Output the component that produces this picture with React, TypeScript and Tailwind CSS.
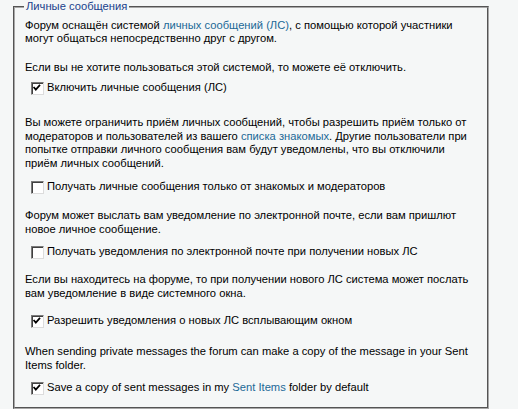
import React from "react";

const LINK = "text-[#1b6896]";

function Box({ checked }: { checked?: boolean }) {
  return (
    <span className="relative inline-block h-[13px] w-[13px] shrink-0 border border-t-[#7a7a7a] border-l-[#7a7a7a] border-r-[#dcdcdc] border-b-[#dcdcdc] bg-white shadow-[inset_1px_1px_0_#404040]">
      {checked ? (
        <svg viewBox="0 0 13 13" className="absolute left-0 top-0 h-[11px] w-[11px]">
          <path d="M2.5 5.5 L4.5 7.8 L8.8 3" fill="none" stroke="#000" strokeWidth="2" strokeLinecap="square" />
        </svg>
      ) : null}
    </span>
  );
}

function Check({ checked, children }: { checked?: boolean; children: React.ReactNode }) {
  return (
    <label className="ml-[6px] flex h-[14px] items-center gap-[3px] whitespace-nowrap">
      <Box checked={checked} />
      <span>{children}</span>
    </label>
  );
}

export default function App() {
  return (
    <div
      className="min-h-[409px] w-[518px] bg-[#f5f7f7] pl-[13px] text-[11.2px] leading-[13.5px] text-black"
      style={{ fontFamily: '"Liberation Sans", Arial, sans-serif' }}
    >
      <fieldset className="w-[476px] border-2 border-[#a8a8a8] pb-[12px] pl-[10px] pr-1 whitespace-nowrap [border-style:groove]">
        <legend className="ml-[-1px] px-[2px] text-[#203f8c]">Личные сообщения</legend>

        <p className="mt-[5px]">
          Форум оснащён системой <span className={LINK}>личных сообщений (ЛС)</span>, с помощью которой участники
          <br />
          могут общаться непосредственно друг с другом.
        </p>
        <p className="mt-[15px]">Если вы не хотите пользоваться этой системой, то можете её отключить.</p>
        <div className="mt-[7px]">
          <Check checked>Включить личные сообщения (ЛС)</Check>
        </div>

        <p className="mt-[21px]">
          Вы можете ограничить приём личных сообщений, чтобы разрешить приём только от
          <br />
          модераторов и пользователей из вашего <span className={LINK}>списка знакомых</span>. Другие пользователи при
          <br />
          попытке отправки личного сообщения вам будут уведомлены, что вы отключили
          <br />
          приём личных сообщений.
        </p>
        <div className="mt-[10px]">
          <Check>Получать личные сообщения только от знакомых и модераторов</Check>
        </div>

        <p className="mt-[15px]">
          Форум может выслать вам уведомление по электронной почте, если вам пришлют
          <br />
          новое личное сообщение.
        </p>
        <div className="mt-[9px]">
          <Check>Получать уведомления по электронной почте при получении новых ЛС</Check>
        </div>

        <p className="mt-[14px]">
          Если вы находитесь на форуме, то при получении нового ЛС система может послать
          <br />
          вам уведомление в виде системного окна.
        </p>
        <div className="mt-[14px]">
          <Check checked>Разрешить уведомления о новых ЛС всплывающим окном</Check>
        </div>

        <p className="mt-[17px]">
          When sending private messages the forum can make a copy of the message in your Sent
          <br />
          Items folder.
        </p>
        <div className="mt-[9px]">
          <Check checked>
            Save a copy of sent messages in my <span className={LINK}>Sent Items</span> folder by default
          </Check>
        </div>
      </fieldset>
    </div>
  );
}
